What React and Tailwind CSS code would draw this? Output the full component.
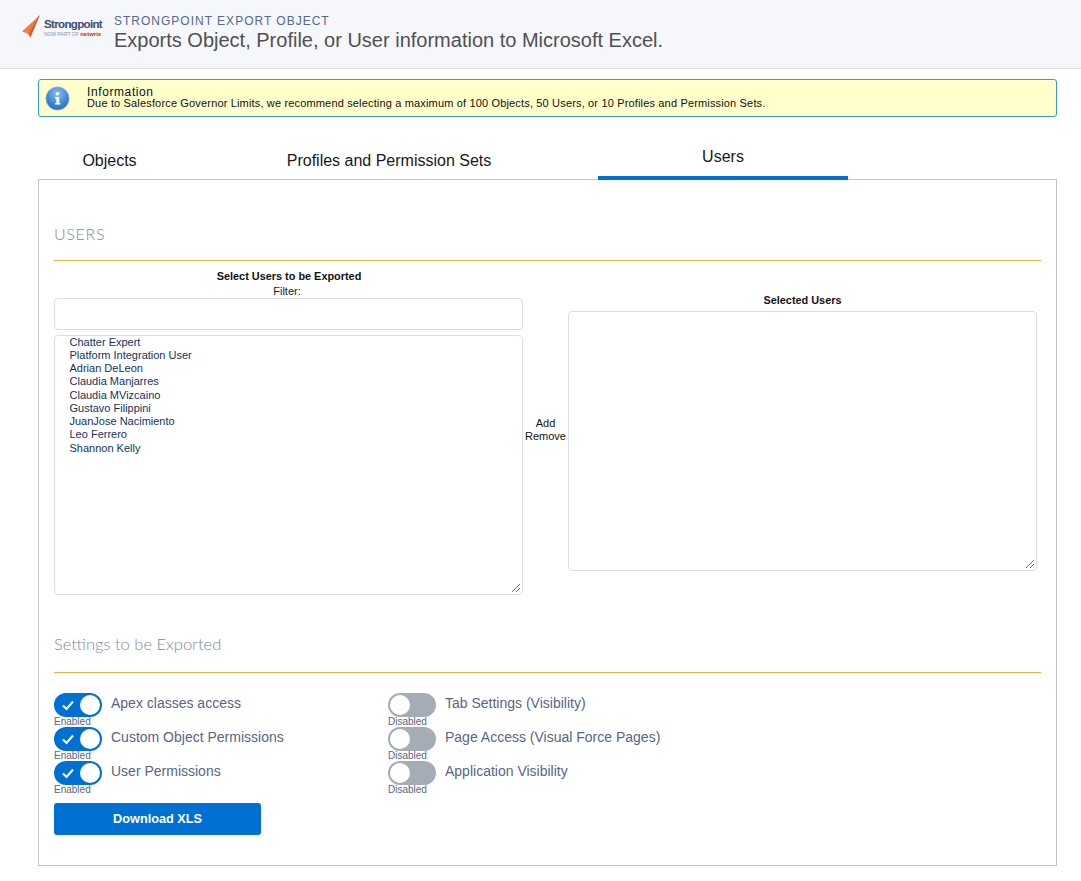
import React from 'react';

const users = [
  'Chatter Expert',
  'Platform Integration User',
  'Adrian DeLeon',
  'Claudia Manjarres',
  'Claudia MVizcaino',
  'Gustavo Filippini',
  'JuanJose Nacimiento',
  'Leo Ferrero',
  'Shannon Kelly',
];

const enabledSettings = ['Apex classes access', 'Custom Object Permissions', 'User Permissions'];
const disabledSettings = ['Tab Settings (Visibility)', 'Page Access (Visual Force Pages)', 'Application Visibility'];

const Logo = () => (
  <div className="flex items-start w-[81px] h-[28px]">
    <svg width="19" height="23" viewBox="0 0 19 23" className="shrink-0 mt-[1px]">
      <path d="M0 16.5 L17.5 0.5 L13.5 9 L8.5 22.5 L6 18.5 Z" fill="#ef7f3f" />
      <path d="M6 18.5 L17.5 0.5 L8.5 22.5 Z" fill="#e96a2c" />
      <path d="M8 20 L17.5 0.5" stroke="#7a4a33" strokeWidth="0.5" />
    </svg>
    <div className="ml-[3px] mt-[3.5px] flex flex-col">
      <span className="text-[11.5px] leading-[13px] font-bold text-[#3f4a72] tracking-[-0.65px] whitespace-nowrap">Strongpoint</span>
      <span className="text-[5px] leading-[7px] text-[#8a90a8] whitespace-nowrap">
        NOW PART OF <span className="font-bold text-[#d8232a] text-[6px]">netwrix</span>
      </span>
    </div>
  </div>
);

const InfoIcon = () => (
  <svg width="25" height="25" viewBox="0 0 26 26">
    <defs>
      <radialGradient id="infoBall" cx="50%" cy="30%" r="75%">
        <stop offset="0%" stopColor="#8fc0ef" />
        <stop offset="60%" stopColor="#3f86d6" />
        <stop offset="100%" stopColor="#2a68bd" />
      </radialGradient>
    </defs>
    <circle cx="13" cy="13" r="12" fill="url(#infoBall)" stroke="#7eaede" strokeWidth="0.8" />
    <circle cx="13" cy="8" r="1.8" fill="#fff" />
    <path d="M10.5 11.5 H14.8 V17.8 H16 V19.3 H10.5 V17.8 H11.8 V13 H10.5 Z" fill="#fff" />
  </svg>
);

const Resizer = () => (
  <svg width="10" height="10" viewBox="0 0 10 10" className="absolute right-[1px] bottom-[1px]">
    <path d="M1 9 L9 1 M5 9 L9 5" stroke="#777" strokeWidth="1" />
  </svg>
);

const Toggle = ({ on, label }) => (
  <div className="h-[34px] flex items-start">
    <div className="w-[57px] shrink-0">
      <div className={`w-[48px] h-[24px] rounded-full flex items-center px-[2px] ${on ? 'bg-[#0070d2] justify-end' : 'bg-[#a4adb6] justify-start'}`}>
        {on && (
          <svg width="14" height="14" viewBox="0 0 14 14" className="mr-[5px]">
            <path d="M2 7.5 L5.5 11 L12 3.5" fill="none" stroke="#fff" strokeWidth="2" />
          </svg>
        )}
        <div className="w-[20px] h-[20px] rounded-full bg-white" />
      </div>
      <div className="text-[10px] leading-[10px] text-[#586586]">{on ? 'Enabled' : 'Disabled'}</div>
    </div>
    <span className="text-[14px] leading-[20px] text-[#586586] whitespace-nowrap">{label}</span>
  </div>
);

export default function App() {
  return (
    <div className="w-[1081px] h-[881px] bg-white overflow-hidden font-['Liberation_Sans',Arial,sans-serif]">
      {/* header */}
      <div className="h-[69px] bg-[#f6f7fb] border-b border-[#dddfe4] flex pl-[22px] pt-[14px]">
        <Logo />
        <div className="ml-[11px]">
          <div className="text-[12px] leading-[14px] tracking-[1px] text-[#54698d]">STRONGPOINT EXPORT OBJECT</div>
          <div className="text-[20px] leading-[24px] text-[#515151]">Exports Object, Profile, or User information to Microsoft Excel.</div>
        </div>
      </div>

      <div className="pl-[38px] pr-[24px]">
        {/* info box */}
        <div className="mt-[10px] h-[38px] bg-[#ffffcc] border border-[#3a9bc4] rounded-[3px] flex items-center pl-[6px]">
          <InfoIcon />
          <div className="ml-[17px] text-[11px] leading-[11px] text-[#111] tracking-[0.16px] -mt-[1px]">
            <div className="text-[12px] tracking-[0.6px] leading-[12px]">Information</div>
            <div>Due to Salesforce Governor Limits, we recommend selecting a maximum of 100 Objects, 50 Users, or 10 Profiles and Permission Sets.</div>
          </div>
        </div>

        {/* tabs */}
        <div className="mt-[23px] h-[40px] -mb-[1px] relative flex text-[16px] text-[#181818]">
          <div className="w-[143px] text-center pt-[11px] leading-[20px]">Objects</div>
          <div className="w-[414px] ml-[1px] text-center pt-[11px] leading-[20px]">Profiles and Permission Sets</div>
          <div className="w-[250px] ml-[2px] h-[40px] text-center pt-[7px] leading-[20px] border-b-4 border-[#0070d2]">Users</div>
        </div>

        {/* panel */}
        <div className="h-[687px] border border-[#c4c4c4] px-[15px]">
          <div className="mt-[44px] text-[16px] leading-[20px] font-['Lato',sans-serif] font-light tracking-[0.7px] text-[#7f889e]">USERS</div>
          <div className="mt-[16px] h-px bg-[#e6b548]" />

          <div className="flex mt-[9px] items-start">
            <div className="w-[469px]">
              <div className="text-[10.9px] leading-[12px] font-bold text-center text-[#111] pl-[1px]">Select Users to be Exported</div>
              <div className="mt-[3px] text-[11px] leading-[12px] text-center text-[#222] pr-[3px]">Filter:</div>
              <input className="block w-full h-[32px] mt-[1px] border border-[#dddddd] rounded-[4px] bg-white" />
              <div className="relative mt-[5px] h-[260px] border border-[#dddddd] rounded-[4px] pl-[14.5px] text-[11px] leading-[13.25px] text-[#16325c]">
                <div className="-mt-[0.3px]">
                  {users.map((u) => (
                    <div key={u}>{u}</div>
                  ))}
                </div>
                <Resizer />
              </div>
            </div>

            <div className="w-[45px] mt-[147px] text-[11px] leading-[13px] text-center text-[#111]">
              <div>Add</div>
              <div>Remove</div>
            </div>

            <div className="w-[469px]">
              <div className="mt-[24px] text-[10.9px] leading-[12px] font-bold text-center text-[#111]">Selected Users</div>
              <div className="relative mt-[5px] h-[260px] border border-[#dddddd] rounded-[4px]">
                <Resizer />
              </div>
            </div>
          </div>

          <div className="mt-[38px] text-[16.5px] leading-[22px] font-['Lato',sans-serif] font-light text-[#7f889e]">Settings to be Exported</div>
          <div className="mt-[17px] h-px bg-[#e6b548]" />

          <div className="mt-[20px] flex">
            <div className="w-[334px]">
              {enabledSettings.map((s) => (
                <Toggle key={s} on label={s} />
              ))}
            </div>
            <div>
              {disabledSettings.map((s) => (
                <Toggle key={s} on={false} label={s} />
              ))}
            </div>
          </div>

          <button className="block mt-[8px] w-[207px] h-[32px] pt-[1px] bg-[#0070d2] rounded-[3px] text-white text-[12.7px] font-bold text-center">
            Download XLS
          </button>
        </div>
      </div>
    </div>
  );
}
